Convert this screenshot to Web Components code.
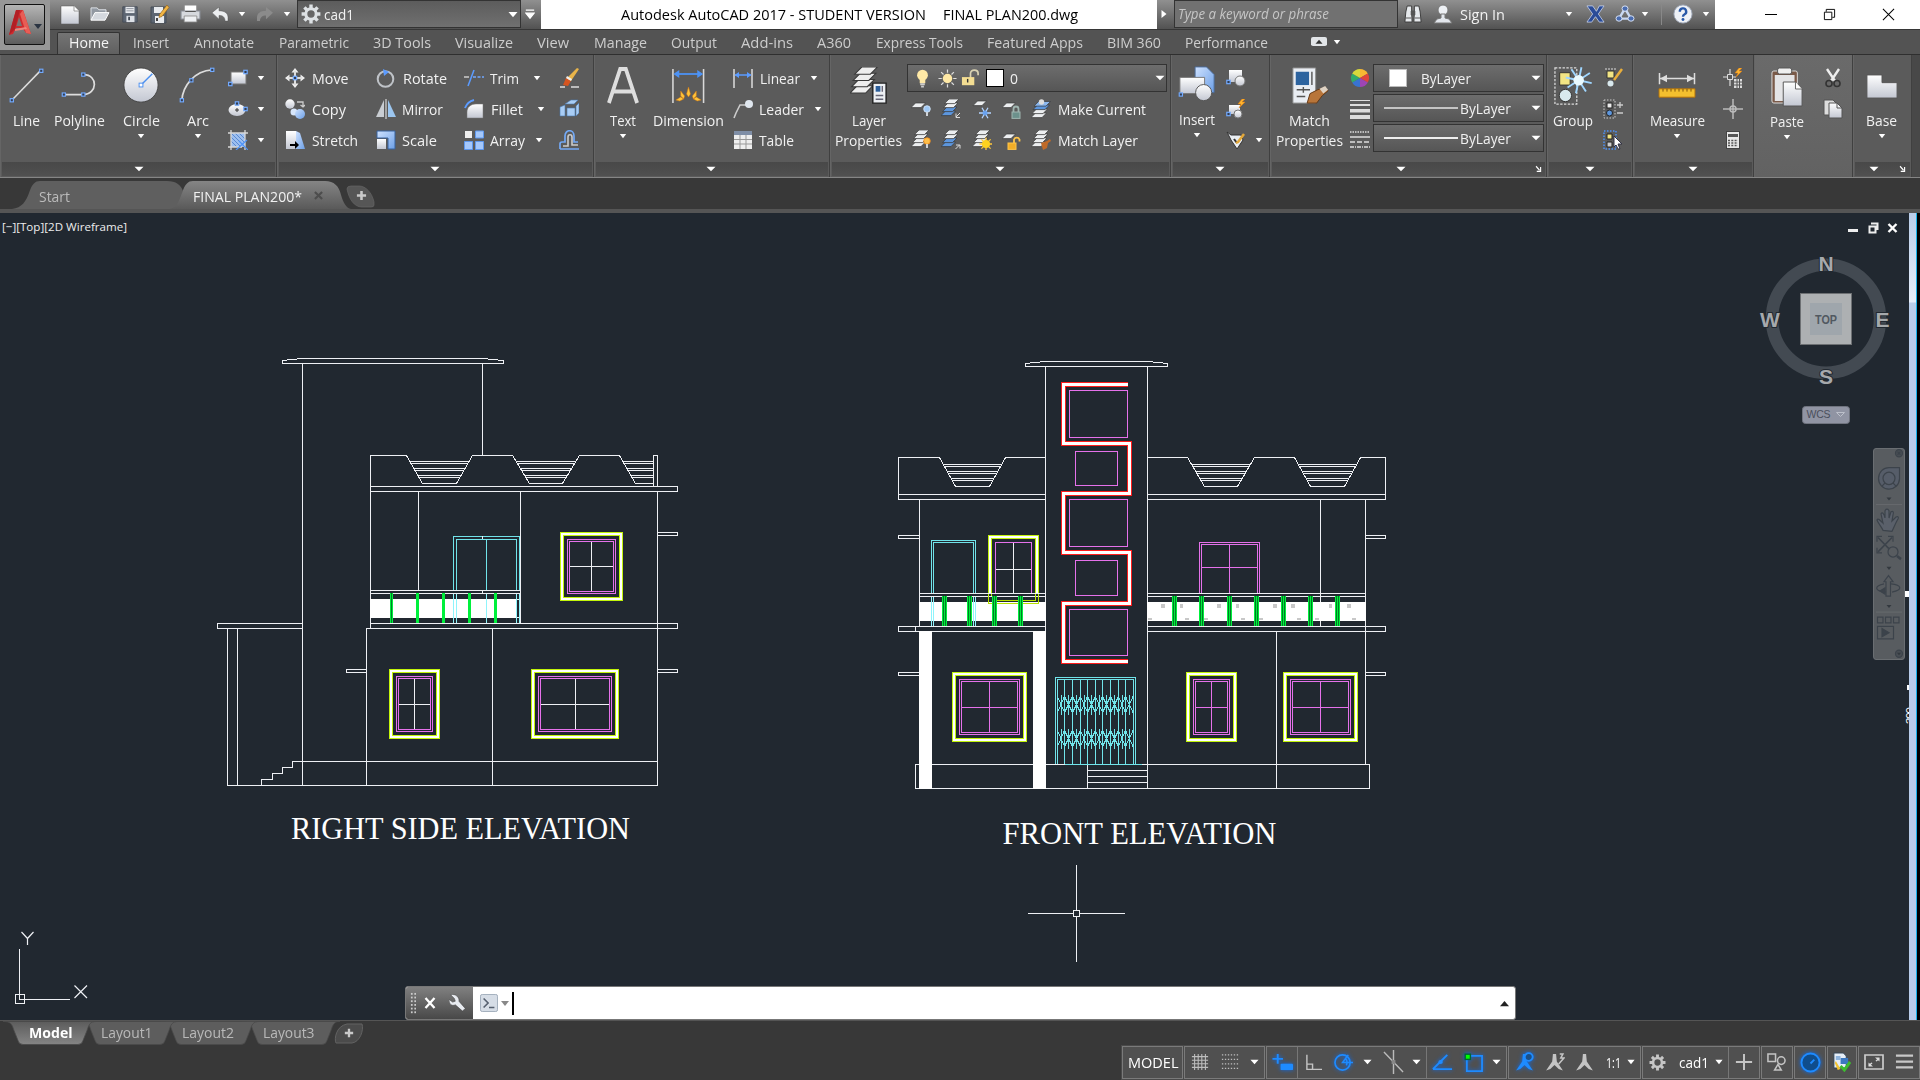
<!DOCTYPE html>
<html lang="en">
<head>
<meta charset="utf-8">
<title>FINAL PLAN200.dwg</title>
<style>
html,body{margin:0;height:100%;background:#383838;overflow:hidden}
body{font-family:"Open Sans","Noto Sans",sans-serif;font-size:14.6px;color:#f1f1f1}
</style>
</head>
<body>
<cad-app></cad-app>
<script>
const base = `<style>*{box-sizing:border-box}:host{display:block;flex:none}.r{display:flex;align-items:center;flex:none}.c{display:flex;flex-direction:column;flex:none}.i{display:flex;align-items:center;justify-content:center;flex:none}.i>*{flex:none}</style>`;
function define(tag, render) {
  customElements.define(tag, class extends HTMLElement {
    connectedCallback() {
      if (this.shadowRoot) return;
      this.attachShadow({mode: 'open'}).innerHTML = base + render(this);
    }
  });
}

/* Text squeezed or stretched to a set width */
customElements.define('fit-text', class extends HTMLElement {
  connectedCallback() {
    if (this.shadowRoot) return;
    const w = +this.getAttribute('w');
    const root = this.attachShadow({mode: 'open'});
    root.innerHTML = `<style>:host{display:inline-block;flex:none;width:${w}px;height:20px;line-height:20px;white-space:pre}span{display:inline-block;transform-origin:0 50%}</style><span><slot></slot></span>`;
    const s = root.querySelector('span');
    const n = s.getBoundingClientRect().width;
    if (n) s.style.transform = `scaleX(${w / n})`;
  }
});

/* Flow row: every item is [start, end, html]; gaps come from the differences */
const row = (from, items, style = '') => {
  let p = from;
  return `<div class="r" style="${style}">` + items.map(([s, e, h]) => {
    const o = `<div class="i" style="width:${(e - s).toFixed(2)}px;margin-left:${(s - p).toFixed(2)}px">${h}</div>`;
    p = e; return o;
  }).join('') + '</div>';
};
const T = (s, e, t) => [s, e, `<fit-text w="${e - s}">${t}</fit-text>`];
const I = (c, n, w = 20, h = 20) => [c - w / 2, c + w / 2, `<cad-icon name="${n}" w="${w}" h="${h}"></cad-icon>`];
const A = (c, n = 'down') => [c - 4, c + 4, `<cad-icon name="${n}" w="8" h="8"></cad-icon>`];

/* ---------- icons ---------- */
const node = (x, y) => `<rect x="${x - 1.7}" y="${y - 1.7}" width="3.4" height="3.4" fill="#333d50" stroke="#72aaff" stroke-width="1.2"/>`;
const sheet = (x, y, f = '#eceef0', w = 12) => `<path d="M${x + 4.5} ${y}h${w - 1}l-4.5 4.6h-${w - 1}z" fill="${f}" stroke="#3a3a3a" stroke-width=".7"/>`;
const stack = (b = '#eceef0') => sheet(0, 12, b, 11) + sheet(1.5, 8, b, 11) + sheet(2.5, 4, '#eceef0', 11) + sheet(3.5, 0, '#eceef0', 11);
const G = '<linearGradient id="g" x2="0" y2="1"><stop stop-color="#fff"/><stop offset="1" stop-color="#c3c7d2"/></linearGradient><linearGradient id="b" x2="1" y2="1"><stop stop-color="#cfe2ff"/><stop offset="1" stop-color="#6c9fe6"/></linearGradient>';
const bulb = (x, y, f, k) => `<circle cx="${x}" cy="${y}" r="3.3" fill="${f}" stroke="${k}" stroke-width=".8"/><path d="M${x} ${y + 3}v4" stroke="#cfd3d8" stroke-width="2"/>`;
const rays = (x, y, a, b, c, n = 8) => { let d = ''; for (let i = 0; i < n; i++) { const t = i * 2 * Math.PI / n; d += `M${(x + a * Math.cos(t)).toFixed(1)} ${(y + a * Math.sin(t)).toFixed(1)}L${(x + b * Math.cos(t)).toFixed(1)} ${(y + b * Math.sin(t)).toFixed(1)}`; } return `<path d="${d}" stroke="${c}" stroke-width="1.3"/>`; };
const gear = c => rays(10, 10, 5, 9.4, c).replace('1.3', '3.4') + `<circle cx="10" cy="10" r="5.2" fill="none" stroke="${c}" stroke-width="3"/>`;
const bolt = (x, y) => `<path d="M${x + 4} ${y}l-4 5h3l-2 4 6-6h-3l3-3z" fill="#ffb52e" stroke="#e07a10" stroke-width=".5"/>`;
const lock = (x, y, f, k, open) => `<rect x="${x}" y="${y}" width="8" height="6.4" fill="${f}" stroke="${k}"/><path d="M${open ? `${x + 6} ${y}v-3.500a3 3 0 0 1 5.5 0v2` : `${x + 1.5} ${y}v-3a2.500 2.500 0 0 1 5 0v3`}" fill="none" stroke="${k}" stroke-width="1.8"/>`;
const anno = c => `<path d="M8.5 2h3l.7 7.5 5.8 9-4-1.5-4-4-4 4-4 1.5 5.8-9z" fill="${c}"/>`;
const ICONS = {
  down: [8, 8, '<path d="M.8 2h6.4L4 6.3z" fill="#fff"/>'],
  downb: [12, 8, '<path d="M.6 1h10.8L6 7z" fill="#fff"/>'],
  up: [10, 8, '<path d="M0 7h10L5 1z" fill="#222"/>'],
  right: [8, 12, '<path d="M1.5 2v8l5-4z" fill="#fff"/>'],
  drop: [12, 14, '<path d="M1 2.5h10M1 6h10l-5 6z" fill="#fff" stroke="#fff" stroke-width="1.5"/>'],
  launch: [10, 10, '<path d="M1.5 1.5l5 5M8 2.5V8H2.5" fill="none" stroke="#fff" stroke-width="1.6"/>'],
  logo: [24, 27, '<path d="M1 26L8 1h7l8 24-5-1-3.5-5H8l-3 6z" fill="#cf2b2e"/><path d="M8 1h4l-5 19-6 6z" fill="#b21f25"/><path d="M15 1l8 24-5-1-6-19z" fill="#e85d55"/><path d="M11 8l3 9H8.500z" fill="#777"/><path d="M7 20l11-2 1 2-12 2z" fill="#f0837a"/>'],
  new: [20, 20, '<path d="M1 2h13l5 5v13H1z" fill="url(#g)" stroke="#555" stroke-width=".5"/><path d="M14 2v5h5" fill="#fff" stroke="#888" stroke-width=".8"/>'],
  open: [20, 18, '<path d="M1 15V2h6l2 2h7v4" fill="#9299a2" stroke="#dfe3e8"/><path d="M1 15L5 7h14l-4 8z" fill="#d4d8de" stroke="#fff"/>'],
  save: [20, 20, '<path d="M2 2h16v17H2z" fill="#5d6673" stroke="#454c57"/><path d="M5 2h10v7H5z" fill="#e8ebef"/><path d="M6 4h8M6 6.500h8" stroke="#8a919c"/><path d="M6 12h9v7H6z" fill="#dde1e7"/><path d="M8 13h2v4H8z" fill="#444b56"/>'],
  saveas: [20, 20, '<path d="M1 3h15v16H1z" fill="#5d6673" stroke="#454c57"/><path d="M4 3h9v6H4zM5 12h9v7H5z" fill="#e8ebef"/><path d="M6 14h2v3H6z" fill="#444"/><path d="M17 1l2 2.500-7 9-3 1 .500-3z" fill="#f2b544" stroke="#8a5a12" stroke-width=".6"/>'],
  print: [20, 20, '<path d="M4 1h12v8H4z" fill="#fff" stroke="#888"/><path d="M1 7h18v8H1z" fill="#d6d9de" stroke="#8b9099"/><path d="M4 12h12v6H4z" fill="#eef0f3" stroke="#888" stroke-width=".8"/><path d="M5 7.500h10" stroke="#555"/>'],
  undo: [18, 16, '<path d="M1 6L8 0v4c6 0 9 3 9 7v4h-3c0-4-2-6-6-6v4z" fill="#eceef0" stroke="#555" stroke-width=".5"/>'],
  redo: [18, 16, '<path d="M17 6L10 0v4C4 4 1 7 1 11v4h3c0-4 2-6 6-6v4z" fill="#8b8b8b"/>'],
  gear: [20, 20, gear('#dde1e4')],
  gear2: [20, 20, gear('#c6c6c6')],
  bino: [20, 20, '<path d="M3.500 2h5v6l.5 10H1l1-10zM11.500 2h5l1.500 6 1 10h-8l.500-10z" fill="#e6e9ec" stroke="#3c3c3c"/><path d="M8 7h4v4H8zM2 14h6M12 14h6" fill="#555" stroke="#555"/>'],
  person: [20, 20, '<circle cx="10" cy="6" r="5" fill="#edf0f4" stroke="#777"/><path d="M1 19l3-4 4-1v-4h4v4l4 1 3 4z" fill="#e2e6ec" stroke="#777"/>'],
  xchg: [20, 20, '<path d="M1 1h6l4 6 3-6h5l-6 9 6 9h-5l-4-6-4 6H1l6-9z" fill="#2a4c98" stroke="#c3cfea" stroke-width=".9"/>'],
  a360: [20, 20, '<path d="M10 4L4 15h12z" fill="none" stroke="#c9d8f2" stroke-width="2.500"/><circle cx="10" cy="4" r="3" fill="#4a6cb0" stroke="#dbe5f6"/><circle cx="4" cy="15" r="3" fill="#4a6cb0" stroke="#dbe5f6"/><circle cx="16" cy="15" r="3" fill="#4a6cb0" stroke="#dbe5f6"/>'],
  help: [22, 22, '<circle cx="11" cy="11" r="10" fill="#eef1f6" stroke="#9fa8b8"/><path d="M7.500 8.500a3.500 3.500 0 1 1 5 3c-1.200.6-1.500 1.300-1.500 2.500" fill="none" stroke="#2858a8" stroke-width="2.600"/><circle cx="11" cy="17" r="1.600" fill="#2858a8"/>'],
  min: [12, 14, '<path d="M0 7.500h12" stroke="#000" shape-rendering="crispEdges"/>'],
  restore: [14, 14, '<path d="M1.500 4.500h8v8h-8zM3.500 4V1.500h9v8.500H10" fill="none" stroke="#000"/>'],
  close: [14, 14, '<path d="M1 1l12 12M13 1L1 13" stroke="#000" stroke-width="1.100"/>'],
  ribmin: [16, 10, '<rect width="16" height="10" rx="2" fill="#e2e5e8"/><path d="M4.500 7.500h7L8 3z" fill="#333"/>'],
  line: [40, 40, '<path d="M4 35L35 3" stroke="#ddd" stroke-width="1.600"/>' + node(4, 35) + node(35, 4)],
  pline: [40, 40, '<path d="M3 29h20c16 0 16-21 1-21" fill="none" stroke="#ddd" stroke-width="1.800"/>' + node(3, 29) + node(23.5, 29) + node(23.5, 8)],
  circle: [40, 40, '<circle cx="20" cy="19" r="18" fill="url(#g)" stroke="#444"/><path d="M20 19L32 7" stroke="#4c90f0" stroke-width="1.500"/><rect x="18" y="17" width="4" height="4" fill="#fff" stroke="#4c90f0"/>'],
  arc: [40, 40, '<path d="M3 35C4 20 16 4 35 3" fill="none" stroke="#ddd" stroke-width="1.800"/>' + node(3, 35) + node(13, 14) + node(35, 3)],
  rect: [20, 20, '<rect x="3" y="4" width="15" height="12" fill="url(#g)" stroke="#777"/>' + node(2.3, 16) + node(17.5, 4)],
  ellipse: [20, 20, '<ellipse cx="9" cy="11" rx="8.500" ry="6" fill="url(#g)"/><path d="M7 11h4M9 9v4" stroke="#333"/>' + node(9, 4.5) + node(17.5, 10)],
  hatch: [20, 20, '<path d="M3 3h14v14H3z" fill="#9dbff0"/><path d="M3 11l6 6M3 7l10 10M3 3l14 14M7 3l10 10M11 3l6 6" stroke="#5a8ad0" stroke-width="1"/><path d="M3 0v20M17 0v20M0 3h20M0 17h14" stroke="#d8d8d8" stroke-width="1.300"/><path d="M8 20L19 10M11 11l9 9" stroke="#4d92f7" stroke-width="1.200"/>'],
  move: [20, 20, '<path d="M10 0l3.500 4.500h-7zM10 20l3.500-4.500h-7zM0 10l4.500-3.500v7zM20 10l-4.500-3.500v7z" fill="#eee"/><path d="M10 3v14M3 10h14" stroke="#ddd" stroke-width="2"/>' + node(10, 10)],
  copy: [20, 20, '<circle cx="5" cy="5" r="4.700" fill="url(#g)"/><path d="M12 3h6v4M15.500 6L18 8l2-2" fill="none" stroke="#ccc" stroke-width="1.300"/><circle cx="9" cy="13" r="3.500" fill="#d7e6fb"/><circle cx="15" cy="15" r="5" fill="url(#b)"/>'],
  stretch: [20, 20, '<path d="M1 1h10v18H1z" fill="url(#g)"/><path d="M11 1l4 2 5 16h-9z" fill="url(#b)"/><path d="M5 15h8" stroke="#000" stroke-width="2"/><path d="M10 11l4 4-4 4z"/>'],
  rotate: [20, 20, '<circle cx="9.500" cy="11" r="7.800" fill="none" stroke="#bfc3c8" stroke-width="2"/><path d="M7 1l6 3-5 4z" fill="#5b9bff"/>'],
  mirror: [20, 20, '<path d="M8 1v17H0z" fill="#c9cdd2"/><path d="M12 1v17h8z" fill="#9cc6ef"/><path d="M10 0v20" stroke="#eee"/>'],
  scale: [20, 20, '<path d="M1 1h18v18h-7V8H1z" fill="url(#b)" stroke="#39629e"/><rect x="1" y="9" width="9" height="10" fill="url(#g)"/>'],
  trim: [20, 20, '<path d="M0 9h5" stroke="#ccc" stroke-width="1.500"/><path d="M4 18L10 2" stroke="#5b9bff" stroke-width="1.600"/><path d="M9 9h11" stroke="#72a8ff" stroke-width="1.500" stroke-dasharray="3 1.500"/>'],
  fillet: [20, 20, '<path d="M3 19V13c0-5 4-8 9-8h7v14z" fill="url(#g)" stroke="#777" stroke-width=".5"/><path d="M1 9c2-5 5-7 9-8" fill="none" stroke="#5b9bff" stroke-width="2"/>'],
  array: [20, 20, '<rect x="1" y="1" width="7" height="7" fill="#eee"/><path d="M11.500 1h8v7h-8zM.500 11.500h8v8h-8zM11.500 11.500h8v8h-8z" fill="#a5c8fb" stroke="#5e98ee"/>'],
  erase: [20, 20, '<path d="M18 0l2 1-8 12-5-2z" fill="#e8b44a"/><path d="M7 10l5 3-3 5-5-1z" fill="#d5541f"/><path d="M8 8l5 3-1 2-5-3z" fill="#eee"/><path d="M1 19h5M12 19h8" stroke="#ddd" stroke-width="1.500"/>'],
  explode: [20, 20, '<path d="M1 8l5-2v11H1zM8 9h8v8H8zM6 5l6-4h7l-4 4zM17 7l3-3v10l-3 3z" fill="#a9cdf5" stroke="#4c78b0" stroke-width=".600"/>'],
  offset: [20, 20, '<path d="M1 19v-5q0-2 2-2h3V6c0-7 9-7 9 0v6h4" fill="none" stroke="#73a9f6" stroke-width="1.700"/><path d="M4 16h5V7c0-3 4-3 4 0v8h6" fill="none" stroke="#ccc" stroke-width="1.600"/><path d="M1 19h19" stroke="#73a9f6" stroke-width="1.500"/>'],
  textA: [34, 38, '<path d="M2 36L14 2h6l12 34M7 24.500h20" fill="none" stroke="#dedede" stroke-width="4"/>'],
  dim: [36, 38, '<path d="M2 2v34M33.500 2v34" stroke="#d9d9d9" stroke-width="1.600"/><path d="M4 7h28" stroke="#4c92f5" stroke-width="1.800"/><path d="M2.500 7l6-4v8zM33 7l-6-4v8z" fill="#4c92f5"/><path d="M18 20l2 7-2 3-2-3zM10 24l4 5-1 3-3-3zM26 24l-4 5 1 3 3-3zM5 33l5-3 3 2-4 2zM31 33l-5-3-3 2 4 2z" fill="#ffc53a" stroke="#d67910" stroke-width=".5"/>'],
  linear: [20, 20, '<path d="M1 1v19M19 1v19" stroke="#ddd" stroke-width="1.500"/><path d="M2 7h16" stroke="#5b9bff" stroke-width="1.500"/><path d="M1.500 7l4.500-3v6zM18.500 7L14 4v6z" fill="#5b9bff"/>'],
  leader: [20, 20, '<path d="M1 19l2-5 4-8h6" fill="none" stroke="#ccc" stroke-width="1.600"/><circle cx="16" cy="5" r="4" fill="#dfe6ee"/>'],
  table: [20, 20, '<path d="M1 1h18v18H1z" fill="#eee"/><path d="M1 1h18v4H1z" fill="#7f8ea6"/><path d="M1 9.500h18M1 14h18M7 5v14M13 5v14" stroke="#999"/>'],
  layprop: [40, 40, '<g transform="scale(1.650)">' + sheet(0, 12, '#eee', 11) + sheet(1, 8, '#eee', 11) + sheet(2, 4, '#eee', 11) + sheet(3, 0, '#eee', 11) + '</g><path d="M24 17h14v21H24z" fill="#edf0f4" stroke="#222" stroke-width="1.500"/><path d="M27 20h5v6h-5z" fill="#2c5f9c"/><path d="M34 20v6M27 30h8M27 34h8" stroke="#667" stroke-width="1.500"/>'],
  bulb: [14, 20, '<circle cx="7" cy="6.500" r="5.800" fill="#ffe9a6"/><path d="M4 10h6v5H4z" fill="#ffe9a6"/><path d="M4.500 16h5M5.500 18.500h3" stroke="#ccc" stroke-width="2"/>'],
  sun: [20, 20, rays(10, 10, 6, 9.5, '#ddd') + '<circle cx="10" cy="10" r="5" fill="#ffe9a6"/>'],
  unlock: [20, 20, '<path d="M10 10V5c0-5 8-5 8 0v2" fill="none" stroke="#d9d2b2" stroke-width="1.800"/><path d="M1 9h13v9H1z" fill="#f3dd92"/><path d="M7 11v4" stroke="#333" stroke-width="1.500"/>'],
  white: [18, 18, '<rect x=".5" y=".5" width="17" height="17" fill="#fff" stroke="#000"/>'],
  white2: [18, 18, '<rect x=".5" y=".5" width="17" height="17" fill="#fff" stroke="#bbb"/>'],
  loff: [20, 20, sheet(0, 4, '#eceef0', 11) + bulb(16, 10, '#9fc8f5', '#d8e8fa')],
  liso: [20, 20, stack('#5d96dd') + '<path d="M19 14l-4 4m0-3.500v4h4" stroke="#ddd" fill="none"/>'],
  lfrz: [20, 20, sheet(1, 2, '#eceef0', 10) + rays(13, 14, 0, 6, '#b5d5ff', 6) + '<circle cx="13" cy="14" r="2.500" fill="#6aa2ee"/>'],
  llock: [20, 20, sheet(0, 4, '#eceef0', 10) + lock(10, 13, '#6c918c', '#9fb5b0')],
  lmake: [20, 20, sheet(0, 14) + sheet(1, 10) + sheet(2, 6, '#5d96dd', 13) + sheet(3, 2.5, '#8db8ee', 13) + '<circle cx="10.500" cy="3" r="2.700" fill="#ddd"/>'],
  lon: [20, 20, stack() + bulb(16, 11, '#ffc04a', '#f08a1c')],
  luni: [20, 20, stack('#5d96dd') + '<path d="M14.500 19l4-4m-3.500 0h4v3.500" stroke="#ddd" fill="none"/>'],
  lthaw: [20, 20, stack() + rays(14, 14, 3, 6.5, '#ffc83a') + '<circle cx="14" cy="14" r="4" fill="#ffd21e"/>'],
  lunl: [20, 20, sheet(0, 4, '#eceef0', 10) + lock(6, 13, '#f2ae27', '#ffc54a', 1)],
  lmatch: [20, 20, stack() + '<path d="M10 13l6-2 3-2 1 2-3 2-1 5-4 2z" fill="#c06a28"/>'],
  insert: [40, 40, '<path d="M18 1h12l8 8v19H18z" fill="url(#b)" stroke="#4d6e9c"/><path d="M2 12h26v17H2z" fill="url(#g)" stroke="#777"/><circle cx="27" cy="28" r="8.500" fill="url(#g)" stroke="#555"/>' + node(3, 30)],
  blk1: [20, 20, '<path d="M3 2h13v12H3z" fill="url(#g)"/><circle cx="14" cy="13" r="5" fill="url(#g)" stroke="#777"/>' + node(2.5, 14)],
  blk2: [20, 20, '<path d="M3 6h11v9H3z" fill="url(#g)"/><circle cx="12" cy="15" r="4" fill="url(#g)" stroke="#777"/>' + bolt(12, 0) + node(2.5, 15)],
  blk3: [20, 20, '<path d="M1 2l4 3h10l2 5-6 9-6-9z" fill="#e9edf2" stroke="#333"/><path d="M8 9l3 4" stroke="#333" stroke-width="2"/><path d="M18 4l-6 8-2 1" stroke="#e3a83a" stroke-width="2.500" fill="none"/>'],
  match: [40, 40, '<path d="M2 1h24v37H2z" fill="#e9edf3" stroke="#888"/><path d="M5 5h14v14H5z" fill="#2c639f"/><path d="M22 5v14M6 24h14M6 31h9M13 21v6" stroke="#555" stroke-width="1.500"/><path d="M20 28l8-4 8-3 3 4-6 5-6 8-10 0z" fill="#b8753a" stroke="#633815"/><path d="M30 23l6-3 3 4-5 4z" fill="#ded2c4"/>'],
  wheel: [20, 20, '<path d="M10 10V1a9 9 0 0 1 7.800 4.500z" fill="#f7b733"/><path d="M10 10l7.800-4.500a9 9 0 0 1 0 9z" fill="#e0443c"/><path d="M10 10l7.800 4.500A9 9 0 0 1 10 19z" fill="#9d45b5"/><path d="M10 10v9a9 9 0 0 1-7.800-4.500z" fill="#3873d2"/><path d="M10 10l-7.800 4.500a9 9 0 0 1 0-9z" fill="#33ab6b"/><path d="M10 10L2.200 5.500A9 9 0 0 1 10 1z" fill="#d7d93c"/>'],
  lwt: [20, 20, '<path d="M0 1h20v1H0zM0 5h20v2H0zM0 10h20v3.500H0zM0 16h20v4H0z" fill="#ddd"/>'],
  ltype: [20, 20, '<path d="M0 2h20" stroke="#ddd" stroke-width="1.500" stroke-dasharray="1.500 1"/><path d="M0 7h20" stroke="#ddd" stroke-width="1.500"/><path d="M0 12h20" stroke="#ddd" stroke-width="1.500" stroke-dasharray="5 2"/><path d="M0 17h20" stroke="#ddd" stroke-width="1.500" stroke-dasharray="4 1 1 1"/>'],
  group: [40, 40, '<path d="M1 1h23v38H1z" fill="none" stroke="#ddd" stroke-dasharray="2.500 1.500" stroke-width="1.300"/><path d="M6 6h11v13H6z" fill="#f2e584" stroke="#333"/><circle cx="12" cy="30" r="6.500" fill="#d9e9ee" stroke="#333"/>' + '<g transform="rotate(12 26 14)">' + rays(26, 14, 0, 14, '#9fd6ff').replace('1.3', '2') + '</g><circle cx="26" cy="14" r="5.500" fill="#eafaff"/>'],
  gedit: [20, 20, '<path d="M2 1h12" stroke="#ddd" stroke-dasharray="2 1"/><path d="M4 3h7v7H4z" fill="#f2e584" stroke="#333"/><circle cx="7.500" cy="15.500" r="3" fill="#d9e9ee"/><path d="M19 1l-8 11" stroke="#e8ae3c" stroke-width="2.500"/>'],
  gadd: [20, 20, '<path d="M1 1h11v18H1z" fill="none" stroke="#ccc" stroke-dasharray="1.500 1.500"/><rect x="4" y="4" width="5" height="5" fill="#eee" stroke="#222"/><circle cx="6.500" cy="14" r="3" fill="#5d96dd" stroke="#222"/><path d="M14 6h6M17 3v6M14 14h6" stroke="#ccc" stroke-width="1.300"/>'],
  gsel: [20, 20, '<path d="M1 1h12v18H1z" fill="none" stroke="#4d92f7" stroke-dasharray="1.500 1.500" stroke-width="1.500"/><path d="M4 4h5v5H4z" fill="#f2e584" stroke="#222"/><path d="M4 12h5v5H4z" fill="#ccc" stroke="#222"/><path d="M11 6l8 8h-4l2 5h-2l-2-4-2 2z" fill="#fff" stroke="#334"/>'],
  measure: [38, 30, '<path d="M1.500 1v12M36.500 1v12M2 7h34" stroke="#ddd" stroke-width="1.500"/><path d="M2 7l7-4v8zM36 7l-7-4v8z" fill="#ddd"/><path d="M1 18h36v9H1z" fill="#f4c02e" stroke="#b0700d"/><path d="M5 18v3M9 18v3M13 18v3M17 18v3M21 18v3M25 18v3M29 18v3M33 18v3" stroke="#7c5208"/>'],
  qsel: [20, 20, '<path d="M7 1v17M0 9h13" stroke="#ddd" stroke-width="1.200"/><path d="M4.500 6.500h5v5h-5z" fill="#5a5a5a" stroke="#ddd"/>' + bolt(12, 0) + '<path d="M11 11h8v9h-8z" fill="#ddd"/><path d="M11 14h8M11 17h8M14 11v9M16.500 11v9" stroke="#555"/>'],
  point: [20, 20, '<path d="M10 0v20M0 10h20" stroke="#bbb" stroke-width="1.500"/><circle cx="10" cy="10" r="3" fill="none" stroke="#bbb" stroke-width="1.500"/>'],
  calc: [14, 18, '<rect x=".5" y=".5" width="13" height="17" fill="#e8e8e8" stroke="#444"/><path d="M2 3h10v3H2z" fill="#555"/><path d="M2 9.500h10M2 12h10M2 14.500h10" stroke="#555" stroke-width="1.400" stroke-dasharray="2 1.300"/>'],
  paste: [34, 40, '<rect x="1" y="4" width="27" height="32" rx="2" fill="#7a5a49" stroke="#ddd"/><path d="M4 8h21v26H4z" fill="#e4e4e6"/><rect x="7" y="1" width="15" height="6" rx="2" fill="#efefef" stroke="#555"/><path d="M13 15h13l7 7v17H13z" fill="url(#g)" stroke="#555"/><path d="M26 15v7h7" fill="#fff" stroke="#666"/>'],
  cut: [20, 20, '<path d="M4 1l8 12M16 1L8 13" stroke="#eee" stroke-width="2.400"/><circle cx="6" cy="15.500" r="3" fill="none" stroke="#333" stroke-width="1.600"/><circle cx="14" cy="15.500" r="3" fill="none" stroke="#333" stroke-width="1.600"/>'],
  copyclip: [20, 20, '<path d="M1 1h9l3 3v12H1z" fill="#ddd" stroke="#555"/><path d="M6 4h8l5 5v10H6z" fill="url(#g)" stroke="#555"/><path d="M14 4v5h5" fill="none" stroke="#555"/>'],
  base: [34, 26, '<path d="M1 1h16v8h16v16H1z" fill="url(#g)" stroke="#555"/>'],
  x: [10, 10, '<path d="M1 1l8 8M9 1L1 9" stroke="#4d4d4d" stroke-width="2.400"/>'],
  wx: [12, 12, '<path d="M1.500 1l9 10M10.500 1l-9 10" stroke="#fff" stroke-width="2.300"/>'],
  plus: [12, 12, '<path d="M6 1v10M1 6h10" stroke="#c9c9c9" stroke-width="2.800"/>'],
  wrench: [20, 20, '<path d="M2 1l4 4 1 3-3 1-4-3c0 5 3 8 7 6l8 7 3-3-7-8C12 4 7-1 2 1z" fill="#e8ebf0" stroke="#444" stroke-width=".6"/>'],
  prompt: [20, 20, '<rect x=".5" y=".5" width="19" height="19" rx="2" fill="#d6dde6" stroke="#9aa6b5"/><path d="M4 5l5 5-5 5M10 15h6" fill="none" stroke="#555f6e" stroke-width="1.800"/>'],
  grid: [20, 20, '<path d="M4 1v18M8 1v18M12 1v18M16 1v18M1 4h18M1 8h18M1 12h18M1 16h18" stroke="#bdbdbd" stroke-width="1.200"/>'],
  dots: [20, 20, '<path d="M1 2h18M1 7h18M1 12h18M1 17h18" stroke="#bdbdbd" stroke-width="1.500" stroke-dasharray="1.500 1.800"/>'],
  dyn: [22, 20, '<path d="M6 1v11M.5 6.500h11" stroke="#1e8bff" stroke-width="2"/><rect x="9" y="12" width="13" height="7" rx="1" fill="#1e8bff"/>'],
  ortho: [18, 20, '<path d="M2 1v17h16M2 12h6v6" fill="none" stroke="#c4c4c4" stroke-width="1.500"/>'],
  polar: [20, 20, '<circle cx="9" cy="10" r="8" fill="none" stroke="#1e8bff" stroke-width="1.800"/><path d="M20 10H9l6-8M12 6c2 1 2 5 1 7" fill="none" stroke="#1e8bff" stroke-width="1.600"/>'],
  iso: [22, 24, '<path d="M11 0v24M1 2l20 20" stroke="#bbb" stroke-width="1.500"/><path d="M9 10h4v4H9z" fill="#888"/>'],
  otrack: [22, 20, '<path d="M1 18L16 2M1 18h20" fill="none" stroke="#1e8bff" stroke-width="2"/><circle cx="9" cy="10" r="2.300" fill="#1e8bff"/>'],
  osnap: [20, 20, '<path d="M3 3h16v16H3z" fill="none" stroke="#1e8bff" stroke-width="1.900"/><rect x=".5" y=".5" width="7" height="7" fill="#063"/><rect x="2" y="2" width="4" height="4" fill="#0f0"/>'],
  an1: [20, 20, anno('#1e8bff') + '<circle cx="14" cy="5" r="3.800" fill="#1b4f86" stroke="#1e8bff" stroke-width="1.800"/>'],
  an2: [20, 20, anno('#c4c4c4') + '<path d="M15 2l3 0-2 4h3l-5 6" fill="none" stroke="#c4c4c4" stroke-width="1.500"/>'],
  an3: [20, 20, anno('#c4c4c4')],
  splus: [20, 20, '<path d="M10 1v18M1 10h18" stroke="#c4c4c4" stroke-width="2.200"/>'],
  shapes: [20, 20, '<path d="M1 1h8v8H1zM8 18h7l-3.500-6z" fill="none" stroke="#c4c4c4" stroke-width="1.600"/><circle cx="15" cy="8" r="4" fill="none" stroke="#c4c4c4" stroke-width="1.600"/>'],
  hw: [22, 22, '<circle cx="11" cy="11" r="9.500" fill="#0f4d8c" stroke="#1e8bff" stroke-width="2"/><path d="M11 12l4-4" stroke="#1e8bff" stroke-width="2"/>'],
  plot: [20, 20, '<path d="M2 1h10l3 3v12H2z" fill="#e6eef7" stroke="#345"/><path d="M9 6h8v6H9z" fill="#3c78c0"/><path d="M4 4h5v4H4z" fill="#8fb4dd"/><path d="M4 9l5 8-3 1-3-7z" fill="#f5c431"/><path d="M9 14l4 4 6-8" fill="none" stroke="#3dbb2f" stroke-width="3"/>'],
  full: [20, 18, '<path d="M1 1h18v16H1z" fill="none" stroke="#ccc" stroke-width="1.700"/><path d="M4.500 14V9.500L9 14zM15.500 4v4.500L11 4z" fill="#ddd"/><path d="M5 13l3-3M15 5l-3 3" stroke="#ddd" stroke-width="1.500"/>'],
  menu: [20, 20, '<path d="M1 3h18M1 9.500h18M1 16h18" stroke="#c8c8c8" stroke-width="2.400"/>'],
};
define('cad-icon', el => {
  const [vw, vh, body] = ICONS[el.getAttribute('name')];
  const w = el.getAttribute('w'), h = el.getAttribute('h');
  const glow = el.hasAttribute('glow') ? 'filter:drop-shadow(0 0 2px #0a6cf0)' : '';
  return `<style>:host{width:${w}px;height:${h}px}svg{display:block;${glow}}</style><svg width="${w}" height="${h}" viewBox="0 0 ${vw} ${vh}" preserveAspectRatio="none"><defs>${G}</defs>${body}</svg>`;
});

/* ---------- title bar ---------- */
define('cad-titlebar', () => `<style>
:host{display:flex;height:29px;background:#fff;color:#f2f2f2}
.r{height:28px}.g{height:29px;align-items:flex-start;background:linear-gradient(#909090,#525252)}
.combo,.search{height:28px;background:linear-gradient(#5c5c5c,#707070);border:1px solid #333}
.search{background:#717171;font-style:italic;color:#c6c6c6;font-size:13.6px}
.combo .r,.search .r{height:26px}
.t{color:#000;align-items:flex-start}
</style>` +
`<div class="r g" style="width:541px;padding-left:50px">` +
row(50, [I(70, 'new'), I(100, 'open', 20, 17), I(130, 'save', 18, 18), I(159.5, 'saveas'), I(190, 'print', 21, 20), I(220, 'undo', 18, 15), A(242), I(265, 'redo', 18, 15), A(287)]) +
row(291, [[296.5, 521, row(297.5, [I(310.5, 'gear', 20, 20), T(324, 354, 'cad1'), I(513, 'downb', 10, 7)], 'width:224px').replace('class="r"', 'class="r combo"')], I(530, 'drop', 10, 12)]) + '</div>' +
`<div class="r t" style="width:616px">` + row(541, [T(621, 926, 'Autodesk AutoCAD 2017 - STUDENT VERSION'), T(943, 1078, 'FINAL PLAN200.dwg')]) + '</div>' +
`<div class="r g" style="width:558px">` +
row(1157, [I(1164, 'right', 8, 12), [1174, 1398, row(1175, [T(1178, 1329, 'Type a keyword or phrase')], 'width:224px').replace('class="r"', 'class="r search"')], I(1413, 'bino', 18, 20), I(1443, 'person', 20, 20), T(1460, 1505, 'Sign In'), A(1569), I(1595, 'xchg', 19, 18), I(1625, 'a360', 20, 18), A(1645), [1661, 1662, '<i style="width:1px;height:22px;background:#888"></i>'], I(1683, 'help', 20, 20), A(1705.5)]) + '</div>' +
row(1715, [I(1771, 'min', 12, 14), I(1829, 'restore', 13, 13), I(1888, 'close', 13, 13)]));

/* ---------- application button ---------- */
define('cad-appbutton', () => `<style>:host{position:absolute;left:0;top:0;width:50px;height:50px;background:#979797;padding:4px}
.b{width:41px;height:41px;border:1px solid #111;border-radius:2px;background:linear-gradient(#b5b5b5,#5c5c5c);display:flex;align-items:center;padding:0 0 4px 3px;gap:2px}</style>
<div class="b"><cad-icon name="logo" w="24" h="27"></cad-icon><svg width="8" height="5" style="margin-top:8px"><path d="M0 0h8L4 5z" fill="#2b3442"/></svg></div>`);

/* ---------- ribbon tabs ---------- */
define('cad-tabs', () => `<style>:host{display:block;height:25px;background:#535353;border-top:1px solid #363636;color:#cdcdcd}
.r{height:24px;margin-top:-.5px}.on{width:63px;height:22px;margin-top:3px;padding-bottom:3px;justify-content:center;background:linear-gradient(#747474,#606060);border:1px solid #333;border-bottom:0;border-radius:2px 2px 0 0;color:#f4f4f4}</style>` +
row(0, [[57, 120, '<div class="r on"><fit-text w="40">Home</fit-text></div>'], T(133, 169, 'Insert'), T(194, 254, 'Annotate'), T(279, 349, 'Parametric'), T(373, 431, '3D Tools'), T(455, 513, 'Visualize'), T(537, 569, 'View'), T(594, 647, 'Manage'), T(671, 717, 'Output'), T(741, 793, 'Add-ins'), T(817, 851, 'A360'), T(876, 963, 'Express Tools'), T(987, 1083, 'Featured Apps'), T(1107, 1161, 'BIM 360'), T(1185, 1268, 'Performance'), I(1318.5, 'ribmin', 16, 9), A(1337)]));

/* ---------- ribbon panel: slotted body above a title strip ---------- */
define('cad-panel', el => {
  const s = +el.getAttribute('s'), e = +el.getAttribute('e'), a = el.getAttribute('arrow'), l = el.getAttribute('launch');
  return `<style>:host{width:${e - s}px;height:122px;border-right:1px solid #404040;border-left:1px solid #656565;background:#5b5b5b}
.b{display:flex;height:107px}.s{height:14px;background:linear-gradient(#484848,#505050);margin:0 1px}:host([light]){background:linear-gradient(#6a6a6a,#626262)}</style>
<div class="b"><slot></slot></div>` + (a ? `<div class="s">` + row(s + 2, [I(+a, 'downb', 10, 6)].concat(l ? [I(+l, 'launch', 7, 8)] : []), 'height:14px') + '</div>' : '');
});
define('cad-big', el => {
  const g = k => el.getAttribute(k), w = +g('w'), c = +g('c'), L = (g('label') || '').split('|');
  const ws = g('lw').split(',');
  return `<style>:host{width:${w}px}.c{width:${2 * c}px;align-items:center;padding-top:${g('top') || 11}px}.k{height:${g('ih')}px;display:flex;align-items:center;margin-bottom:1px}.k cad-icon{margin-top:-3px}</style>
<div class="c"><div class="k"><cad-icon name="${g('icon')}" w="${g('iw')}" h="${g('hh') || 38}"></cad-icon></div>` +
  L.map((t, i) => `<fit-text w="${ws[i]}">${t}</fit-text>`).join('') + (g('arrow') !== null ? '<cad-icon name="down" w="8" h="8" style="margin-top:2px"></cad-icon>' : '') + '</div>';
});
/* stacked rows of small tools */
const col = (x0, x1, rows, pt = 7, h = 31) => `<div style="flex:none;width:${x1 - x0}px;padding-top:${pt}px">` + rows.map(r => row(x0, r, `height:${h}px`)).join('') + '</div>';
const big = (icon, w, c, label, lw, o = '') => `<cad-big icon="${icon}" w="${w}" c="${c}" label="${label}" lw="${lw}" ih="43" iw="38" ${o}></cad-big>`;
const combo = (s, e, items, extra = '') => `<div class="r combo" style="width:${e - s}px;${extra}">` + row(s + 1, items) + '</div>';
const panel = (s, e, arrow, html, o = '') => `<cad-panel s="${s}" e="${e}" ${arrow ? `arrow="${arrow}"` : ''} ${o}>${html}</cad-panel>`;
define('cad-ribbon', () => `<style>:host{display:flex;height:124px;background:#484848;border-top:1px solid #2f2f2f;border-bottom:1px solid #858585}
.i{flex:none}.combo{height:28px;border:1px solid #333;background:linear-gradient(#6d6d6d,#565656);margin-bottom:2px}</style>` +
panel(0, 277, 139, big('line', 52, 25.500, 'Line', 27) + big('pline', 53, 26.500, 'Polyline', 51) + big('circle', 70, 35, 'Circle', 37, 'arrow') + big('arc', 44, 22, 'Arc', 22, 'arrow') +
  col(220, 275, [[I(238, 'rect'), A(261)], [I(238, 'ellipse'), A(261)], [I(238, 'hatch'), A(261)]])) +
panel(277, 593.5, 435, 
  col(278, 370, [[I(295, 'move'), T(311.500, 348, 'Move')], [I(295, 'copy'), T(312, 346, 'Copy')], [I(295, 'stretch'), T(312, 358, 'Stretch')]]) +
  col(370, 460, [[I(386, 'rotate'), T(403, 447, 'Rotate')], [I(386, 'mirror'), T(402, 443, 'Mirror')], [I(386, 'scale'), T(402, 437, 'Scale')]]) +
  col(460, 592, [[I(474, 'trim'), T(490, 519, 'Trim'), A(537), I(569, 'erase')], [I(474, 'fillet'), T(491, 523, 'Fillet'), A(541), I(569, 'explode')], [I(474, 'array'), T(490, 525, 'Array'), A(539), I(569, 'offset')]])) +
panel(593.5, 829.5, 711, big('textA', 57, 28.500, 'Text', 26, 'arrow').replace('iw="38"', 'iw="32"') + big('dim', 75, 37, 'Dimension', 71).replace('iw="38"', 'iw="35"') +
  col(726.5, 828, [[I(743, 'linear'), T(760, 800, 'Linear'), A(814)], [I(743, 'leader'), T(759, 804, 'Leader'), A(818)], [I(743, 'table'), T(759, 794, 'Table')]])) +
panel(829.5, 1170.5, 1000, big('layprop', 76, 38, 'Layer|Properties', '34,67') +
  `<div style="flex:none;width:262px;padding-top:7px">` + row(906.5, [[907, 1167, combo(907, 1167, [I(922, 'bulb', 13, 19), I(947, 'sun', 19, 19), I(970, 'unlock', 19, 18), I(995, 'white', 18, 18), T(1010, 1018, '0'), I(1160, 'downb', 10, 6)], 'margin:2px 0 1px')]], 'height:31px') +
  row(906.5, [I(921, 'loff'), I(950.5, 'liso'), I(982, 'lfrz'), I(1012, 'llock'), I(1041, 'lmake'), T(1058, 1146, 'Make Current')], 'height:31px') +
  row(906.5, [I(921, 'lon'), I(950.5, 'luni'), I(982, 'lthaw'), I(1012, 'lunl'), I(1041, 'lmatch'), T(1058, 1138, 'Match Layer')], 'height:31px') + '</div>') +
panel(1170.5, 1270, 1220, big('insert', 52, 25.500, 'Insert', 36, 'arrow top="10"') + col(1223.5, 1268, [[I(1236, 'blk1')], [I(1236, 'blk2')], [I(1236, 'blk3'), A(1259)]])) +
panel(1270, 1547, 1401, big('match', 78, 38.500, 'Match|Properties', '41,67') + col(1349, 1372, [[I(1360, 'wheel')], [I(1360, 'lwt')], [I(1360, 'ltype')]]) +
  `<div style="padding-top:9px;margin-left:1px">` +
  combo(1373, 1544, [I(1398, 'white2', 18, 18), T(1421, 1471, 'ByLayer'), I(1536, 'downb', 10, 6)]) +
  combo(1373, 1544, [[1384, 1458, '<i style="width:74px;height:2px;background:#c4c4c4"></i>'], T(1460, 1511, 'ByLayer'), I(1536, 'downb', 10, 6)]) +
  combo(1373, 1544, [[1384, 1458, '<i style="width:74px;height:2px;background:#eee"></i>'], T(1460, 1511, 'ByLayer'), I(1536, 'downb', 10, 6)]) + '</div>', 'launch="1538"') +
panel(1547, 1633, 1590, big('group', 52, 25, 'Group', 40) + col(1600, 1631, [[I(1612.5, 'gedit')], [I(1612.5, 'gadd')], [I(1612.5, 'gsel')]])) +
panel(1633, 1754, 1693, big('measure', 86, 43, 'Measure', 55, 'arrow hh="28"') + col(1720, 1752, [[I(1733, 'qsel')], [I(1733, 'point')], [I(1733, 'calc', 14, 18)]])) +
panel(1754, 1853, 0, big('paste', 65, 32, 'Paste', 34, 'arrow top="12" hh="40"').replace('iw="38"', 'iw="32"') + col(1820, 1851, [[I(1833, 'cut')], [I(1833, 'copyclip')]]), 'light') +
panel(1853, 1912, 1874, big('base', 57, 27.5, 'Base', 31, 'arrow hh="25"').replace('iw="38"', 'iw="32"'), 'launch="1902"'));

/* ---------- file tabs ---------- */
define('cad-filetabs', () => `<style>:host{display:block;height:35px;background:#383838;border-bottom:4px solid #555;padding-top:3px}
.f{display:grid;height:28px;width:390px}.f>*{grid-area:1/1}.r{height:29px}</style><div class="f">
<svg width="400" height="29"><defs><linearGradient id="a" x2="0" y2="1"><stop stop-color="#858585"/><stop offset="1" stop-color="#5a5a5a"/></linearGradient></defs>
<path d="M12 28c10-1 14-8 17-16 3-9 6-12 11-12h127c9 0 14 4 16 10l-4 18z" fill="#5f5f5f"/><path d="M169 28c8-1 10-8 13-16 3-9 6-12 11-12h132c9 0 14 5 16 14 2 7 5 13 10 14z" fill="url(#a)"/>
<path d="M347 8q0-3 4-3h8c7 0 13 7 15 16v3q0 2-3 2h-9c-8 0-13-8-15-18z" fill="#565656" stroke="#666" stroke-width=".7"/></svg>` +
row(0, [T(39, 70, '<span style="color:#bbb">Start</span>'), T(193, 302, 'FINAL PLAN200*'), I(318, 'x', 9, 9), I(361.500, 'plus', 11, 11)]) + '</div>');

/* ---------- drawing ---------- */
const W = '#eef0f4', M = '#e571ea', C = '#71e4ea', Y = '#c3f50a', GR = '#00f03c';
const P = (d, c = W, w = 1, f = 'none') => `<path d="${d}" stroke="${c}" stroke-width="${w}" fill="${f}"/>`;
const R = (a, b, c, d, k = W) => P(`M${a} ${b}H${c}V${d}H${a}Z`, k);
const F = (a, b, c, d, k = '#fff') => `<rect x="${a}" y="${b}" width="${c - a}" height="${d - b}" fill="${k}"/>`;
const frame = (a, b, c, d) => R(a + .5, b + .5, c - .5, d - .5, Y) + P(`M${a + 2} ${b + 2}H${c - 2}V${d - 2}H${a + 2}Z`, '#fff', 2) + R(a + 3.5, b + 3.5, c - 3.5, d - 3.5, Y);
const win = (a, b, c, d, x, y, k) => frame(a, b, c, d) + R(a + 7.5, b + 7.5, c - 7.5, d - 7.5, M) + R(a + 9.5, b + 9.5, c - 9.5, d - 9.5, M) + P(`M${x} ${b + 10}V${d - 10}M${a + 10} ${y}H${c - 10}`, k);
const louvre = (l, r, l2, r2, t, b, ys, cut = 9999) => ys.map(y => { const k = (y - t) / (b - t); return P(`M${l + (l2 - l) * k} ${y}H${Math.min(cut, r + (r2 - r) * k)}`); }).join('');
const bars = (xs, y0, y1, w) => xs.map(x => F(x - w / 2, y0, x + w / 2, y1, '#007d26') + P(`M${x - w / 2 + .5} ${y0}V${y1}M${x} ${y0}V${y1}M${x + w / 2 - .5} ${y0}V${y1}`, GR)).join('');
const rightSide = () => {
  const ys = [461.5, 463.5, 468.5, 470.5, 475.5, 477.5];
  return P('M282.5 363.5V360.500L302.500 358.500H482.500L503.500 360.500V363.500ZM302.500 363V785M482.500 363V455') +
  P('M370.5 628V455.5H406.5L422.5 483.5H456.5L472.5 455.5H512.5L529.5 483.5H562.5L579.5 455.5H619.5L635.5 483.5H653.5') +
  louvre(406.5, 472.5, 422.5, 456.5, 455.5, 483.5, ys) + louvre(512.5, 579.5, 529.5, 562.5, 455.5, 483.5, ys) + louvre(619.5, 700, 635.5, 700, 455.5, 483.5, ys, 653.5) +
  P('M653.5 486V455.5H657.5V486') + R(370.5, 486.5, 677.5, 491.5) + P('M418.5 491V590M520.5 491V623M657.5 491V785') +
  P('M657.5 532.5H677.5V535.5H657.5M657.5 669.5H677.5V672.5H657.5M366.5 669.5H346.5V672.5H366.5') +
  P('M453.5 590V536.5H519.5V590M456.5 590V539.5H516.5V590M486.5 540V590', C) + P('M482.5 536V539M482.5 590V593') +
  P('M370.5 590.5H520.5V593.5H370.5') + F(370, 599, 516, 618) + P('M516 599.5h4M516 617.5h4') +
  P('M453.5 594V623M456.5 594V623M486.5 594V623M516.5 594V623M519.5 594V623', '#8ff4fb') + bars([391.5, 417.5, 443.5, 469.5, 495.5], 593, 623, 3) + P('M391.5 593V623', '#00802c') +
  P('M370.5 623.5H677.5V628.5H366.5M302.5 623.5H217.5V628.5H302.5M227.5 628V785.5H657.5M237.5 628V785M366.5 628V785M492.5 628V785') +
  P('M261.5 785V779.5H272.5V773.5H282.5V767.5H292.5V761.5H657.5') +
  win(560, 532, 623, 601, 591.5, 566.5, W) + win(389, 669, 440, 739, 414.5, 704.5, W) + win(531, 669, 619, 739, 575.5, 704.5, W);
};
const front = () => {
  const ys = [464.5, 466.5, 471.5, 473.5, 478.5, 480.5];
  let s = P('M1025.5 366.5V363.5L1045.5 361.5H1147.5L1167.5 363.5V366.5ZM1045.5 366V788M1147.5 366V788') +
  P('M1045.5 499.5H898.5V457.5H939.5L955.5 486.5H989.5L1005.5 457.5H1045.5M898.5 494.5H1045.5') + louvre(939.5, 1005.5, 955.5, 989.5, 457.5, 486.5, ys) +
  P('M1147.5 457.5H1187.5L1204.5 486.5H1237.5L1254.5 457.5H1294.5L1310.5 486.5H1344.5L1360.5 457.5H1385.5V499.5H1147.5M1147.5 494.5H1385.5') +
  louvre(1187.5, 1254.5, 1204.5, 1237.5, 457.5, 486.5, ys) + louvre(1294.5, 1360.5, 1310.5, 1344.5, 457.5, 486.5, ys) +
  P('M919.5 499V626M1320.5 499V626M1365.5 499V764M919.5 535.5H898.5V538.5H919.5M919.5 672.5H898.5V675.5H919.5M1365.5 535.5H1385.5V538.5H1365.5M1365.5 672.5H1385.5V675.5H1365.5');
  s += P('M931.5 594V540.5H975.5V594M933.5 594V542.5H973.5V594', C) +
  P('M988.5 596V535.5H1038.5V596M991.5 596V538.5H1035.5V596', Y) + P('M990 593V537H1037V593', '#fff', 2) + P('M995.5 593V542.5H1031.5V593', M) + P('M1013.5 543V593M996 569.5H1031');
  s += P('M1199.5 593V542.5H1259.5V593M1201.5 593V544.5H1257.5V593M1229.5 545V593M1202 567.5H1257', M);
  s += P('M919.5 593.5H1045.5M919.5 596.5H1045.5M1147.5 593.5H1365.5M1147.5 596.5H1365.5') + F(919, 602, 1046, 621) + F(1147, 602, 1366, 621);
  s += P('M988.5 596V603.5H1038.5V596M991.5 600.5H1035.5V596', '#b7e000') + P('M931.5 597V626M933.5 597V626M973.5 597V626M975.5 597V626', '#8ff4fb');
  [[1161, 0], [1180, 1], [1217, 0], [1236, 1], [1273, 0], [1291, 0], [1329, 1], [1347, 0]].forEach(([x, n]) => s += F(x, 604, x + 4 - n, 608, '#c8c8c8'));
  [1148, 1185, 1204, 1241, 1259, 1297, 1315, 1352].forEach(x => s += F(x, 618, x + 4, 620, '#c8c8c8'));
  s += bars([944.5, 969.5, 994.5, 1020.5, 1174.5, 1201.5, 1229.5, 1256.5, 1283.5, 1310.5, 1337.5], 596, 626, 5);
  s += P('M1045.5 626.5H898.5V631.5H1045.5M915.5 626V631M1147.5 626.5H1385.5V631.5H1147.5M1276.5 631V788');
  s += P('M915.5 764.5H1369.5V788.5H915.5ZM1087.5 764V788M1087 770.5H1147M1087 776.5H1147M1087 782.5H1147');
  s += F(919, 631, 932, 789) + F(1033, 631, 1046, 789);
  const z = 'M1128 384.5H1063.5V443.5H1129.5V493.5H1063.5V552.5H1129.5V603.5H1063.5V661.5H1128';
  s += P(z, '#ff1c1c', 5) + P(z, '#fff', 3);
  [[1069.5, 390.5, 1127.5, 437.5], [1075.5, 451.5, 1117.5, 485.5], [1069.5, 499.5, 1127.5, 546.5], [1075.5, 560.5, 1117.5, 595.5], [1069.5, 609.5, 1127.5, 655.5]].forEach(b => s += R(...b, M));
  const v = [1064.5, 1072.5, 1080.5, 1087.5, 1095.5, 1102.5, 1110.5, 1118.5, 1125.5];
  s += P('M1055.5 764V677.5H1135.5V764M1057.5 764V679.5H1133.5V764M1065 764.5H1142', C) + P(v.map(x => `M${x} 680V764`).join(''), C);
  [704.5, 738.5].forEach(y => {
    let a = `M1057.500 ${y - 8}L1061 ${y}`, b = `M1057.500 ${y + 8}L1061 ${y}`, m = `M1061.500 ${y - 10}V${y + 10}`;
    v.forEach((x, i) => { const nx = (x + (v[i + 1] || 1133)) / 2; a += `L${x} ${y - 8}L${nx} ${y}`; b += `L${x} ${y + 8}L${nx} ${y}`; m += `M${Math.floor(nx) + .5} ${y - 10}V${y + 10}`; });
    s += P(a + `L1133 ${y - 8}` + b + `L1133 ${y + 8}` + m, C);
  });
  return s + win(952, 672, 1027, 742, 989.5, 707.5, M) + win(1186, 672, 1237, 742, 1211.5, 707.5, M) + win(1283, 672, 1358, 742, 1320.5, 707.5, M);
};
define('cad-drawing', () => `<style>svg{display:block}.t{font:30.5px "Liberation Serif",serif;fill:#fff}</style>
<svg width="1909" height="807" viewBox="0 213 1909 807"><g shape-rendering="crispEdges" fill="none">${rightSide()}${front()}
${P('M1076.5 865V910M1076.5 917V962M1028 913.5H1073M1080 913.5H1125')}${R(1073.5, 910.5, 1079.5, 916.5)}
${P('M19.5 949V999.5H70')}${R(15.5, 994.5, 24.5, 1003.5)}${F(1905, 591, 1909, 597)}${F(1907, 685, 1909, 690)}</g>
${P('M21.5 932L27.500 938.500L33.500 932M27.500 938.500V945M74.500 985.500L87 998M87 985.500L74.500 998', W, 1.2)}
<text class="t" x="291" y="839" textLength="339" lengthAdjust="spacingAndGlyphs">RIGHT SIDE ELEVATION</text><text class="t" x="1002.500" y="844" textLength="274" lengthAdjust="spacingAndGlyphs">FRONT ELEVATION</text>
<text x="2" y="230.500" textLength="125" lengthAdjust="spacingAndGlyphs" style="font:11.500px 'Open Sans',sans-serif;fill:#eee">[−][Top][2D Wireframe]</text>
<text transform="translate(1914,724) rotate(-90)" textLength="17" style="font:11.500px 'Liberation Sans',sans-serif;fill:#fff">300</text></svg>`);

/* ---------- view cube ---------- */
define('cad-viewcube', () => `<style>:host{position:absolute;left:1750px;top:0}svg{display:block}text{font-family:"Liberation Sans",sans-serif;font-weight:700;text-anchor:middle}</style>
<svg width="156" height="220" viewBox="1750 213 156 220">
<path d="M1848 230.500h10" stroke="#eee" stroke-width="3"/><path d="M1869.500 226.500h6v6h-6zM1871 223.500h6.500v6.500" fill="none" stroke="#eee" stroke-width="2"/><path d="M1888.500 224l8 8M1896.500 224l-8 8" stroke="#fff" stroke-width="2.400"/>
<circle cx="1826" cy="318.800" r="54" fill="none" stroke="#434a52" stroke-width="12.500"/>
<g font-size="21" fill="#a6a9ac" stroke="#212830" stroke-width="2" paint-order="stroke"><text x="1826" y="271">N</text><text x="1826" y="383.500">S</text><text x="1770" y="327">W</text><text x="1882.500" y="327">E</text></g>
<rect x="1800.500" y="293.500" width="51" height="51" fill="#adb0b2" stroke="#6d7073"/><rect x="1810" y="303" width="32" height="32" fill="#9fa6ac"/>
<text x="1826" y="323.700" font-size="13.500" fill="#515961" textLength="22" lengthAdjust="spacingAndGlyphs">TOP</text>
<rect x="1802.500" y="406.500" width="47" height="17" rx="3" fill="#9094a3" stroke="#70747f"/><text x="1818.500" y="418.200" style="font-weight:400" font-size="10.500" fill="#4a4f5c" textLength="24">WCS</text><path d="M1836.500 412.500h8l-4 4z" fill="none" stroke="#bcc0ca"/></svg>`);

/* ---------- navigation bar ---------- */
define('cad-navbar', () => `<style>:host{position:absolute;left:1872px;top:234px}svg{display:block}</style>
<svg width="34" height="216" viewBox="1872 440 34 210" preserveAspectRatio="none"><rect x="1873.500" y="441.500" width="31" height="205" rx="3" fill="#585c60" stroke="#6a6e72"/>
<g fill="none" stroke="#3c434b" stroke-width="1.200"><circle cx="1899" cy="446" r="3.500" fill="#484e54"/><path d="M1897.500 444.500l3 3M1900.500 444.500l-3 3"/>
<path d="M1889 460h10.500v11a10.500 10.500 0 1 1-10.500-11z" fill="#565d69"/><circle cx="1889" cy="470.500" r="6"/><path d="M1885 475l-3 3M1893 475l3 3"/>
<path d="M1876 496h26M1876 600.500h26" stroke="#696d71" stroke-width=".8"/>
<path fill="#5a606a" d="M1883 521c-2-4-5-7-6-10 1-2 3 0 6 3l-2-9c1-2 3-1 4 4v-7c1-2 3-2 4 0v7l2-6c2-1 3 0 2 3l-1 6 4-4c2-1 3 0 2 2-2 3-4 8-6 12z"/>
<path d="M1878 528l14 14M1892 528l-14 14" stroke-width="1.600"/><path d="M1877 532v-5h5M1888 527h5v5M1877 538v5h5"/><circle cx="1893" cy="542" r="5" fill="#585c60"/><path d="M1897 546l4 3" stroke-width="2.500"/>
<path d="M1886 585v-14h-2l4.500-6 4.500 6h-2.500v14z"/><path d="M1886 581c-12-1-12-6-2-8M1891 573c11 1 12 6 1 8"/><path d="M1880 580l5-3v6z" fill="#3c434b"/>
<path d="M1877.500 605.500h5.500v5.500h-5.500zM1885.500 605.500h5.500v5.500h-5.500zM1893.500 605.500h5.500v5.500h-5.500zM1877.500 614.500h16v12h-16z"/><path d="M1882 616.500v8l7-4z" fill="#3c434b"/><circle cx="1899" cy="641" r="3.500" fill="#484e54"/></g>
<path d="M1886.500 489h5l-2.500 3zM1886.500 556.500h5l-2.500 3zM1886.500 593.500h5l-2.500 3zM1897 640h4l-2 2.500z" fill="#33393f"/></svg>`);

/* ---------- command line ---------- */
define('cad-command', () => `<style>:host{position:absolute;left:405px;top:773px;width:1111px;height:34px;display:flex;border:1px solid #777;border-radius:3px;overflow:hidden;background:#fff}
.h{width:67px;height:32px;background:linear-gradient(#808080,#484848)}.r{height:32px}.g{width:6px;height:22px;background:radial-gradient(circle,#ccc 1px,transparent 1.300px) 0 0/3.500px 3.700px}</style>
<div class="h">` + row(406, [[410, 416, '<div class="g"></div>'], I(430, 'wx', 12, 12), I(458, 'wrench', 18, 18)]) + '</div>' +
row(473, [I(488.5, 'prompt', 18, 18), [501, 509, '<svg width="8" height="5"><path d="M0 0h8L4 5z" fill="#888"/></svg>'], [512, 514, '<i style="width:2px;height:23px;background:#000"></i>'], I(1504.5, 'up', 9, 7)]));

define('cad-viewport', () => `<style>:host{display:flex;position:relative;height:807px;background:#212830}.s{width:7px;background:linear-gradient(#b9cdea,#e6eefa 89px,#b9cdea 90px);flex:none}.k{width:1px;background:#17b4ec;flex:none}.n{flex:1;background:#000}</style>
<cad-drawing></cad-drawing><div class="s"></div><div class="k"></div><div class="n"></div><cad-viewcube></cad-viewcube><cad-navbar></cad-navbar><cad-command></cad-command>`);

/* ---------- layout tabs ---------- */
const ltab = (a, b, f) => `<path d="M${a - 9} .5c8 0 9 3 11 9l4 10q1 4 5 4H${b - 9}q4 0 5-4l4-10c2-6 3-9 9-9z" fill="${f}" stroke="#4a4a4a" stroke-width=".8"/>`;
define('cad-layouts', () => `<style>:host{display:grid;height:25px;border-top:1px solid #555;color:#b9b9b9}:host>*{grid-area:1/1}svg{display:block}.r{height:21px}b{color:#fff}</style>
<svg width="380" height="25"><defs><linearGradient id="m" x2="0" y2="1"><stop stop-color="#5c5c5c"/><stop offset="1" stop-color="#858585"/></linearGradient></defs>${ltab(251, 331, '#5d5d5d')}${ltab(170, 250, '#5d5d5d')}${ltab(89, 169, '#5d5d5d')}${ltab(12, 87, 'url(#m)')}
<path d="M347 3h15c2 6-2 18-10 19h-16c-2-4 0-17 11-19z" fill="#4b4b4b" stroke="#626262"/></svg>` +
row(0, [T(28.5, 72, '<b>Model</b>'), T(100.5, 152, 'Layout1'), T(181.5, 233.5, 'Layout2'), T(263, 314.5, 'Layout3'), [344, 354, '<cad-icon name="plus" w="10" h="10" style="margin-top:3px"></cad-icon>']]));

/* ---------- status bar ---------- */
const glow = i => [i[0], i[1], i[2].replace('<cad-icon', '<cad-icon glow')];
const cell = (s, e, items) => [s, e, `<div class="r cell" style="width:${e - s}px">` + row(s + 1, items) + '</div>'];
const bar = x => [x, x + 1, '<i style="width:1px;height:31px;background:#777"></i>'];
define('cad-status', () => `<style>:host{display:block;height:33px;width:1920px}.wrap{margin-left:1121px;width:799px;background:#4a4a4a;height:35px}.cell{height:33px;border:1px solid #7a7a7a;background:#505050;color:#fff}fit-text{margin-top:-1px}</style><div class="wrap">` +
row(1121, [cell(1122, 1183, [T(1127.5, 1178, 'MODEL')]),
 cell(1184, 1265, [I(1200, 'grid', 18, 18), I(1229.5, 'dots', 18, 18), I(1254.5, 'downb', 9, 6)]),
 cell(1266, 1507, [glow(I(1282, 'dyn', 21, 18)), bar(1297), I(1313, 'ortho', 17, 17), glow(I(1343, 'polar', 19, 19)), I(1367.5, 'downb', 9, 6), I(1393, 'iso', 21, 24), I(1416.5, 'downb', 9, 6), bar(1426), glow(I(1442.500, 'otrack', 21, 18)), glow(I(1473, 'osnap', 19, 19)), I(1496.500, 'downb', 9, 6)]),
 cell(1508, 1641, [glow(I(1524.500, 'an1', 21, 20)), I(1554, 'an2', 21, 20), I(1584, 'an3', 21, 20), T(1606, 1621, '1:1'), I(1630.500, 'downb', 8, 6)]),
 cell(1642, 1760, [I(1657.500, 'gear2', 17, 17), T(1679, 1709, 'cad1'), I(1718.500, 'downb', 8, 6), bar(1728), I(1744, 'splus', 18, 18)]),
 cell(1761, 1793, [I(1776.500, 'shapes', 19, 19)]), cell(1794, 1826, [glow(I(1810, 'hw', 21, 21))]), cell(1827, 1857, [I(1841.500, 'plot', 19, 20)]),
 cell(1858, 1920, [I(1873.500, 'full', 20, 16), I(1904.500, 'menu', 19, 18)])], 'height:34px') + '</div>');

define('cad-app', () => `<style>:host{display:flex;flex-direction:column;position:relative;width:1920px;height:1080px;background:#383838;overflow:hidden}</style>
<cad-titlebar></cad-titlebar><cad-tabs></cad-tabs><cad-ribbon></cad-ribbon><cad-filetabs></cad-filetabs><cad-viewport></cad-viewport><cad-layouts></cad-layouts><cad-status></cad-status><cad-appbutton></cad-appbutton>`);
</script>
</body>
</html>
